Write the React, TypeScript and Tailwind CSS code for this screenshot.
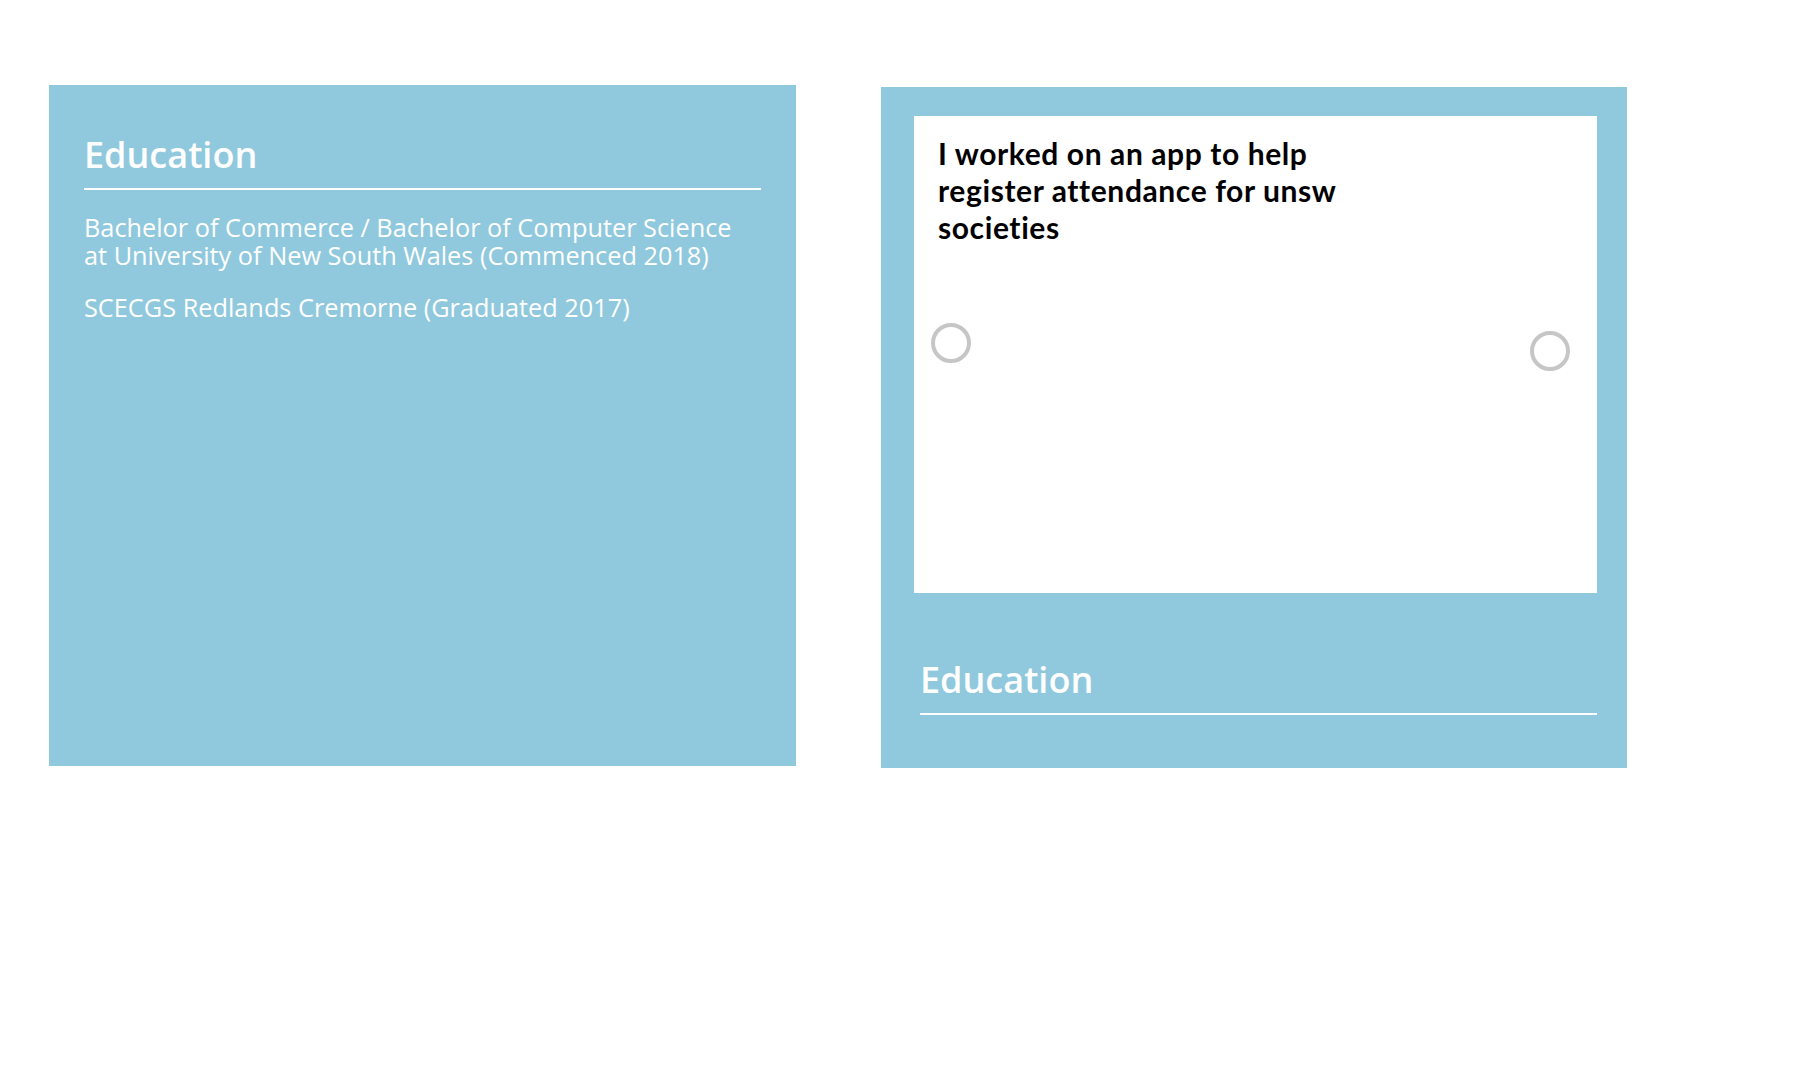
const Heading = ({ className }: { className?: string }) => {
  return (
    <div className={`border-b-2 border-white ${className ?? ""}`}>
      <h2 className="text-[36px] leading-[40px] font-semibold text-white font-['Open_Sans',sans-serif]">
        Education
      </h2>
    </div>
  );
};

const App = () => {
  return (
    <main className="min-h-[1070px] w-full bg-white flex items-start gap-[85px] pt-[85px] pl-[49px]">
      {/* LEFT CARD */}
      <section className="w-[747px] h-[681px] bg-[#90c9dd] px-[35px] pt-[50px]">
        <Heading className="pb-[13px]" />
        <div className="text-white text-[25.3px] leading-[28px] font-['Open_Sans',sans-serif]">
          <p className="mt-[23px] max-w-[655px]">
            Bachelor of Commerce / Bachelor of Computer Science at University of
            New South Wales (Commenced 2018)
          </p>
          <p className="mt-[24px]">SCECGS Redlands Cremorne (Graduated 2017)</p>
        </div>
      </section>

      {/* RIGHT CARD */}
      <section className="mt-[2px] w-[746px] h-[681px] bg-[#90c9dd] pt-[29px] pl-[33px] pr-[30px]">
        <div className="relative w-[683px] h-[477px] bg-white pt-[19px] pl-[24px]">
          <p className="w-[430px] text-[30px] leading-[37px] tracking-[0.6px] font-bold text-black font-['Lato',sans-serif]">
            I worked on an app to help register attendance for unsw societies
          </p>
          <button className="absolute left-[17px] top-[207px] w-[40px] h-[40px] rounded-full border-4 border-[#c6c6c6]" />
          <button className="absolute left-[616px] top-[215px] w-[40px] h-[40px] rounded-full border-4 border-[#c6c6c6]" />
        </div>
        <Heading className="mt-[67px] ml-[6px] pb-[13px]" />
      </section>
    </main>
  );
};
export default App;
